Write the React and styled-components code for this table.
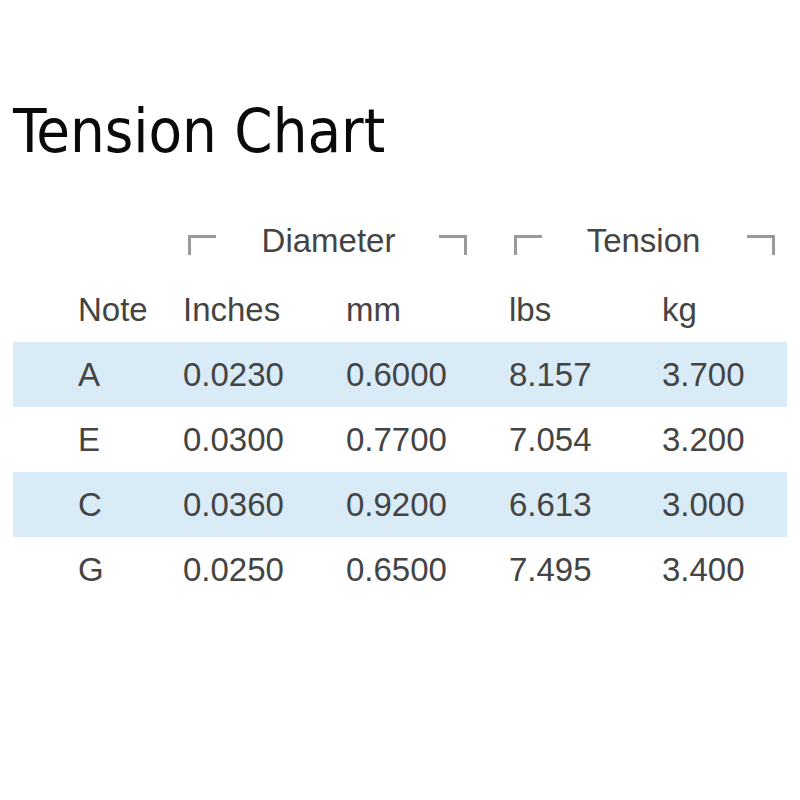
import React from "react";
import styled, { createGlobalStyle } from "styled-components";

const Global = createGlobalStyle`
  html, body { margin: 0; padding: 0; background: #fff; }
  body { width: 800px; height: 800px; overflow: hidden; }
`;

const Page = styled.div`
  width: 800px;
  height: 800px;
  background: #fff;
  padding: 0 13px;
  box-sizing: border-box;
`;

const Title = styled.h1`
  margin: 0;
  padding: 93px 0 0 0;
  height: 212px;
  box-sizing: border-box;
  font-family: "DejaVu Sans Condensed", "DejaVu Sans", sans-serif;
  font-weight: normal;
  font-size: 61px;
  line-height: 76px;
  color: #0a0a0a;
  letter-spacing: 0;
`;

const Table = styled.div`
  display: grid;
  grid-template-columns: 170px 163px 163px 153px 1fr;
  font-family: "Liberation Sans", Arial, sans-serif;
  font-size: 33px;
  color: #444;
`;

const GroupRow = styled.div`
  grid-column: 2 / span 4;
  display: flex;
  gap: 47px;
  height: 65px;
  padding-left: 5px;
  align-items: center;
`;

const Group = styled.div`
  width: ${(p) => p.$w}px;
  display: flex;
  justify-content: space-between;
  align-items: center;
  margin-top: 0;
`;

const GroupLabel = styled.span`
  margin-top: -8px;
  margin-left: ${(p) => p.$offset || 0}px;
`;

const Spacer = styled.div`
  height: 65px;
`;

const Cell = styled.div`
  height: 65px;
  line-height: 66px;
  padding-left: ${(p) => (p.$first ? 65 : 0)}px;
  background: ${(p) => (p.$band ? "#d9ebf7" : "transparent")};
  white-space: nowrap;
`;

const Bracket = ({ right }) => (
  <svg width="28" height="20" viewBox="0 0 28 20" style={{ display: "block" }}>
    <path
      d={right ? "M0 1.5 H26.5 V20" : "M28 1.5 H1.5 V20"}
      fill="none"
      stroke="#9a9a9a"
      strokeWidth="3"
    />
  </svg>
);

const rows = [
  ["A", "0.0230", "0.6000", "8.157", "3.700"],
  ["E", "0.0300", "0.7700", "7.054", "3.200"],
  ["C", "0.0360", "0.9200", "6.613", "3.000"],
  ["G", "0.0250", "0.6500", "7.495", "3.400"],
];

export default function App() {
  return (
    <Page>
      <Global />
      <Title>Tension Chart</Title>
      <Table>
        <Spacer />
        <GroupRow>
          <Group $w={279}>
            <Bracket />
            <GroupLabel $offset={2}>Diameter</GroupLabel>
            <Bracket right />
          </Group>
          <Group $w={261}>
            <Bracket />
            <GroupLabel $offset={-2}>Tension</GroupLabel>
            <Bracket right />
          </Group>
        </GroupRow>
        {["Note", "Inches", "mm", "lbs", "kg"].map((h, i) => (
          <Cell key={h} $first={i === 0}>
            {h}
          </Cell>
        ))}
        {rows.map((r, ri) =>
          r.map((v, ci) => (
            <Cell key={ri + "-" + ci} $first={ci === 0} $band={ri % 2 === 0}>
              {v}
            </Cell>
          ))
        )}
      </Table>
    </Page>
  );
}
